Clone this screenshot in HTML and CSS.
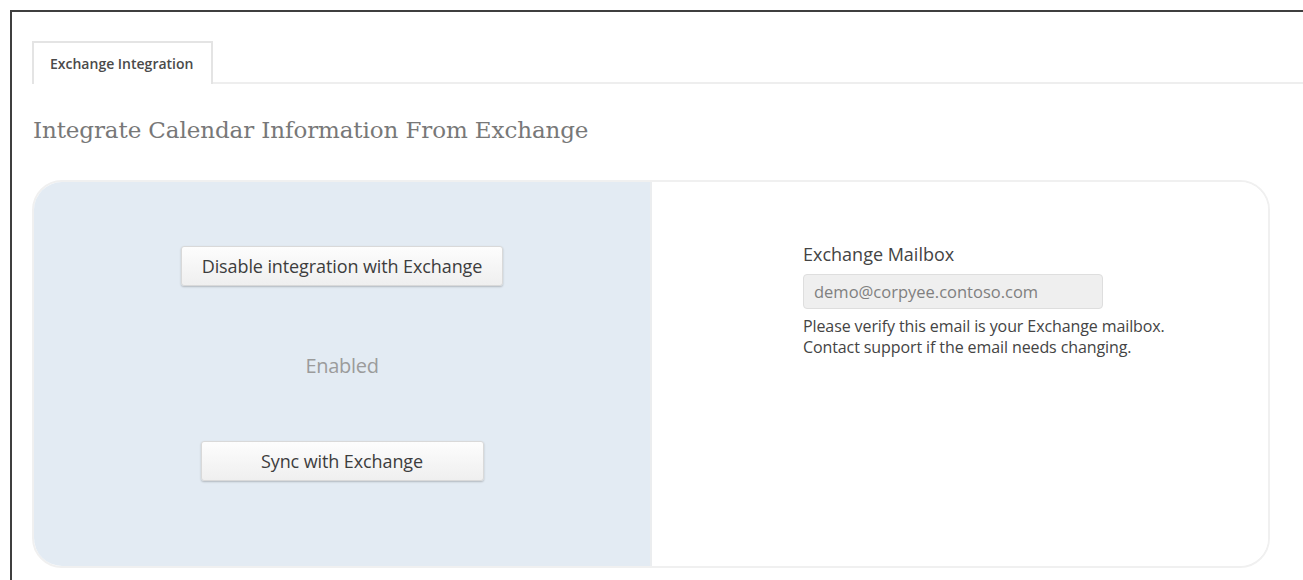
FILE: index.html
```html
<!DOCTYPE html>
<html lang="en">
<head>
<meta charset="utf-8">
<title>Exchange Integration</title>
<link rel="stylesheet" href="styles.css">
</head>
<body>
<div class="frame">
  <div class="tabs">
    <div class="tab tab-active">Exchange Integration</div>
  </div>
  <h1 class="page-title">Integrate Calendar Information From Exchange</h1>
  <div class="card">
    <div class="card-actions">
      <button class="btn btn-disable" type="button">Disable integration with Exchange</button>
      <div class="status">Enabled</div>
      <button class="btn btn-sync" type="button">Sync with Exchange</button>
    </div>
    <div class="card-details">
      <label class="field-label" for="mailbox">Exchange Mailbox</label>
      <input class="field-input" id="mailbox" type="text" value="demo@corpyee.contoso.com" readonly>
      <p class="field-help">Please verify this email is your Exchange mailbox.<br>Contact support if the email needs changing.</p>
    </div>
  </div>
</div>
</body>
</html>
```
FILE: styles.css
```css
* {
  box-sizing: border-box;
}

html, body {
  margin: 0;
  padding: 0;
  background: #ffffff;
  height: 100%;
  overflow: hidden;
}

body {
  font-family: "Open Sans", "Noto Sans", sans-serif;
  color: #444;
}

.frame {
  margin: 10px 0 0 10px;
  border-top: 2px solid #3f3f3f;
  border-left: 2px solid #3f3f3f;
  height: 570px;
  padding: 29px 0 0 20px;
}

/* tab strip */
.tabs {
  display: flex;
  border-bottom: 2px solid #eeeeee;
}

.tab {
  width: 181px;
  height: 41px;
  padding-left: 16px;
  display: flex;
  align-items: center;
  font-size: 14px;
  font-weight: 600;
  color: #4a4a4a;
}

.tab-active {
  background: #fff;
  border: 2px solid #e4e4e4;
  border-bottom: none;
  margin-bottom: -2px;
  height: 43px;
}

.page-title {
  margin: 30px 0 0 1px;
  font-family: "DejaVu Serif", "Liberation Serif", serif;
  font-weight: normal;
  font-size: 23px;
  line-height: 32px;
  color: #787878;
  letter-spacing: -0.1px;
}

/* integration card */
.card {
  margin-top: 34px;
  width: 1238px;
  height: 388px;
  border: 2px solid #f0f0f0;
  border-radius: 30px;
  overflow: hidden;
  display: grid;
  grid-template-columns: 618px 1fr;
}

.card-actions {
  background: #e3ebf3;
  border-right: 2px solid #ebedef;
  display: flex;
  flex-direction: column;
  align-items: center;
  padding-top: 64px;
}

.btn {
  height: 40px;
  font-family: "Open Sans", "Noto Sans", sans-serif;
  font-size: 18px;
  color: #3d3d3d;
  letter-spacing: -0.1px;
  background: linear-gradient(#fdfdfd, #efefef);
  border: 1px solid #d9d9d9;
  border-radius: 3px;
  box-shadow: 0 1px 2px rgba(0, 0, 0, 0.22);
  padding: 0;
}

.btn-disable {
  width: 322px;
}

.btn-sync {
  width: 283px;
  margin-top: 61px;
}

.status {
  margin-top: 66px;
  font-size: 20px;
  line-height: 28px;
  color: #9b9b9b;
  letter-spacing: -0.3px;
}

.card-details {
  background: #fff;
  padding: 60px 0 0 151px;
  display: flex;
  flex-direction: column;
  align-items: flex-start;
}

.field-label {
  font-size: 18px;
  line-height: 24px;
  color: #444;
}

.field-input {
  margin-top: 8px;
  width: 300px;
  height: 35px;
  padding: 0 10px;
  font-family: "Open Sans", "Noto Sans", sans-serif;
  font-size: 16.5px;
  color: #808080;
  background: #efefef;
  border: 1px solid #dedede;
  border-radius: 4px;
}

.field-help {
  margin: 7px 0 0;
  font-size: 16px;
  line-height: 21px;
  color: #444;
  letter-spacing: -0.1px;
}
```
